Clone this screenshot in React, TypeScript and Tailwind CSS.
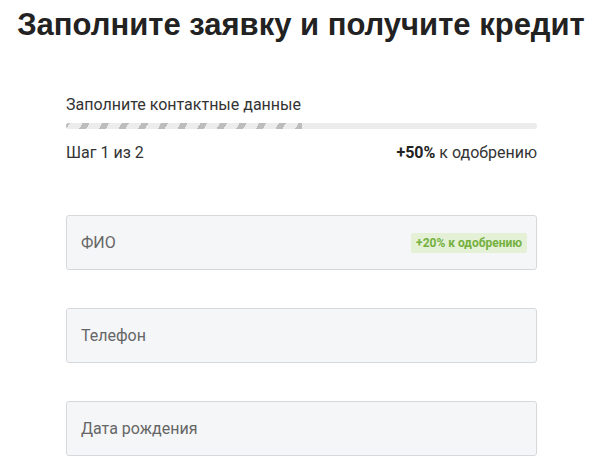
export default function App() {
  const fields = [
    { label: "ФИО", bonus: "+20% к одобрению" },
    { label: "Телефон" },
    { label: "Дата рождения" },
  ];

  return (
    <div className="w-[594px] h-[475px] bg-white overflow-hidden font-['Roboto',sans-serif] text-[#222]">
      <h1 className="pt-[8px] pl-[8px] text-center text-[31px] leading-[34px] font-bold text-[#222] font-['Liberation_Sans',Arial,sans-serif] whitespace-nowrap">
        Заполните заявку и получите кредит
      </h1>

      <div className="ml-[66px] mr-[57px] mt-[53px]">
        <p className="text-[16px] leading-[20px] text-[#333]">Заполните контактные данные</p>

        {/* progress */}
        <div className="mt-[8px] h-[6px] rounded-full bg-[#ececec] overflow-hidden">
          <div className="h-full w-1/2 bg-[repeating-linear-gradient(-60deg,#bcbcbc_0px,#bcbcbc_6px,#ececec_6px,#ececec_17px)]" />
        </div>

        <div className="mt-[14px] flex justify-between text-[16px] leading-[20px] text-[#333]">
          <span>Шаг 1 из 2</span>
          <span>
            <b className="font-bold text-[#222]">+50%</b> к одобрению
          </span>
        </div>

        <div className="mt-[52px] flex flex-col gap-[38px]">
          {fields.map((f) => (
            <div
              key={f.label}
              className="h-[55px] flex items-center justify-between pl-[14px] pr-[9px] rounded-[3px] border border-[#d6d8db] bg-[#f5f6f8]"
            >
              <span className="text-[16px] text-[#666]">{f.label}</span>
              {f.bonus && (
                <span className="px-[5px] py-[3px] rounded-[2px] bg-[#e4f1d6] text-[#74b03f] text-[12px] leading-[14px] font-bold">
                  {f.bonus}
                </span>
              )}
            </div>
          ))}
        </div>
      </div>
    </div>
  );
}
